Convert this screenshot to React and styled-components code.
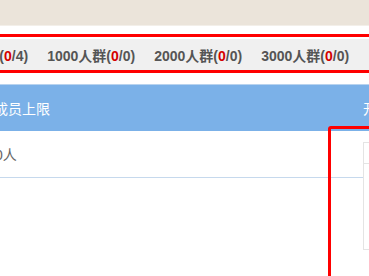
import React from 'react';
import styled, { createGlobalStyle } from 'styled-components';

const GlobalStyle = createGlobalStyle`
	html, body {
		margin: 0;
		padding: 0;
		background: #fff;
	}
	body {
		font-family: 'Liberation Sans', 'Noto Sans CJK SC', sans-serif;
		font-size: 14px;
	}
`;

const Page = styled.div`
	position: relative;
	width: 369px;
	height: 276px;
	overflow: hidden;
	background: #fff;
`;

const TopBar = styled.div`
	height: 25px;
	background: #ebe4da;
	border-bottom: 1px solid #f3efe9;
`;

const TabFrame = styled.div`
	margin: 8px -10px 0;
	border: 3px solid #ff0000;
	padding-top: 2px;
`;

const TabBar = styled.div`
	height: 31px;
	background: #f0f0f0;
	display: flex;
	align-items: center;
	overflow: hidden;
`;

const TabList = styled.ul`
	display: flex;
	gap: 19px;
	margin: 0 0 0 -45px;
	padding: 0;
	list-style: none;
	white-space: nowrap;
`;

const Tab = styled.li`
	color: #555;
	font-size: 14px;
	font-weight: bold;
	span {
		color: #d40000;
	}
`;

const Table = styled.div`
	margin-top: 11px;
	border-top: 1px solid #b8d3ef;
`;

const HeadRow = styled.div`
	display: grid;
	grid-template-columns: 369px 120px;
	height: 46px;
	align-items: center;
	background: #7bb1e8;
	color: #fff;
`;

const BodyRow = styled.div`
	display: grid;
	grid-template-columns: 369px 120px;
	height: 46px;
	align-items: center;
	border-bottom: 1px solid #c6d9ed;
	color: #666;
`;

const Cell = styled.div`
	margin-left: ${(p) => p.$offset || 0}px;
	white-space: nowrap;
`;

const Marker = styled.div`
	position: absolute;
	left: 328px;
	top: 126px;
	width: 80px;
	height: 200px;
	border: 3px solid #ff0000;
	border-radius: 3px;
`;

const Popup = styled.div`
	position: absolute;
	left: 363px;
	top: 142px;
	width: 120px;
	height: 106px;
	background: #fff;
	border: 1px solid #e4e4e4;
`;

const PopupHead = styled.div`
	height: 20px;
	border-bottom: 1px solid #e4e4e4;
`;

const tabs = [
	{ size: 500, used: 0, total: 4 },
	{ size: 1000, used: 0, total: 0 },
	{ size: 2000, used: 0, total: 0 },
	{ size: 3000, used: 0, total: 0 },
];

const App = () => {
	return (
		<Page>
			<GlobalStyle />
			<TopBar />
			<TabFrame>
				<TabBar>
					<TabList>
						{tabs.map((t) => (
							<Tab key={t.size}>
								{t.size}人群(<span>{t.used}</span>/{t.total})
							</Tab>
						))}
					</TabList>
				</TabBar>
			</TabFrame>
			<Table>
				<HeadRow>
					<Cell $offset={-6}>成员上限</Cell>
					<Cell $offset={-6}>开启状态</Cell>
				</HeadRow>
				<BodyRow>
					<Cell $offset={-5}>0人</Cell>
					<Cell />
				</BodyRow>
			</Table>
			<Marker />
			<Popup>
				<PopupHead />
			</Popup>
		</Page>
	);
};

export default App;
